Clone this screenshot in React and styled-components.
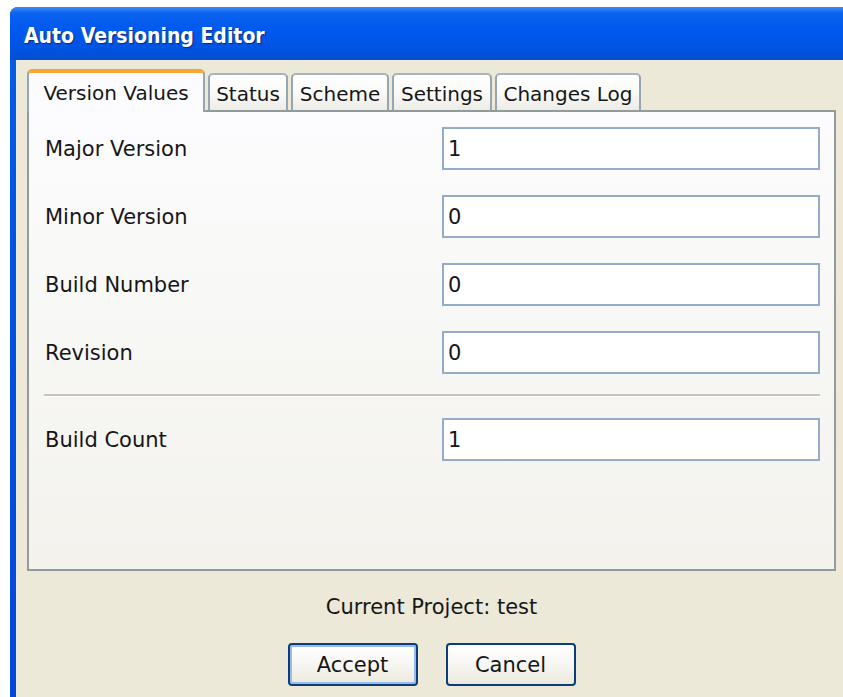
import React from "react";
import styled, { createGlobalStyle } from "styled-components";

const Global = createGlobalStyle`
  html, body { margin: 0; padding: 0; background: #ffffff; overflow: hidden; }
  body { width: 843px; height: 697px; }
`;

const Window = styled.div`
  margin: 7px 0 0 10px;
  width: 850px;
  height: 700px;
  display: flex;
  flex-direction: column;
  border-radius: 8px 8px 0 0;
  background: linear-gradient(180deg, #0a5fe6 0%, #0055e5 30%, #0048d8 100%);
  overflow: hidden;
`;

const TitleBar = styled.div`
  height: 53px;
  flex: none;
  display: flex;
  align-items: center;
  padding-left: 14px;
  background: linear-gradient(180deg, #3d8cf6 0%, #0a62ee 12%, #0058ee 45%, #0054e3 75%, #0150d8 92%, #0a4bc6 100%);
`;

const Title = styled.span`
  font-family: "DejaVu Sans Condensed", "DejaVu Sans", Verdana, sans-serif;
  font-weight: bold;
  font-size: 21px;
  color: #ffffff;
  text-shadow: 1px 1px 1px #0a2a80;
  margin-top: 4px;
`;

const Body = styled.div`
  flex: 1;
  margin-left: 6px;
  background: #ece9d8;
  padding: 9px 0 0 11px;
  display: flex;
  flex-direction: column;
  font-family: "DejaVu Sans", Tahoma, sans-serif;
  font-size: 21px;
  color: #161616;
`;

const TabStrip = styled.div`
  display: flex;
  align-items: flex-end;
  height: 41px;
  gap: 3px;
  position: relative;
  z-index: 1;
`;

const Tab = styled.div`
  box-sizing: border-box;
  width: ${p => p.$w}px;
  height: ${p => (p.$active ? 43 : 37)}px;
  margin-bottom: ${p => (p.$active ? -2 : 0)}px;
  display: flex;
  align-items: center;
  justify-content: center;
  font-size: 20px;
  border: 2px solid #97a5b0;
  border-bottom: none;
  border-radius: 5px 5px 0 0;
  background: ${p =>
    p.$active
      ? "#fcfcfe"
      : "linear-gradient(180deg, #ffffff 0%, #fafaf8 50%, #ecebe5 100%)"};
  border-top: ${p => (p.$active ? "4px solid #f8a633" : "2px solid #a9b4bd")};
  padding-top: ${p => (p.$active ? 0 : 2)}px;
  white-space: nowrap;
`;

const Panel = styled.div`
  box-sizing: border-box;
  width: 809px;
  height: 461px;
  border: 2px solid #919b9c;
  background: linear-gradient(180deg, #fcfcfe 0%, #f8f8f6 40%, #f3f2ed 100%);
  padding: 15px 14px 0 15px;
  display: flex;
  flex-direction: column;
`;

const Row = styled.div`
  display: flex;
  align-items: center;
  justify-content: space-between;
  height: 43px;
  margin-bottom: ${p => p.$gap ?? 25}px;
`;

const Label = styled.span`
  padding-left: 1px;
`;

const Field = styled.div`
  box-sizing: border-box;
  width: 378px;
  height: 43px;
  border: 2px solid #94acca;
  background: #ffffff;
  display: flex;
  align-items: center;
  padding-left: 4px;
`;

const Separator = styled.div`
  height: 2px;
  background: #c6c4b8;
  border-bottom: 1px solid #ffffff;
  margin: 0 0 21px 0;
`;

const Footer = styled.div`
  width: 809px;
  display: flex;
  flex-direction: column;
  align-items: center;
`;

const ProjectLine = styled.div`
  margin-top: 24px;
`;

const Buttons = styled.div`
  display: flex;
  gap: 28px;
  margin-top: 24px;
`;

const Button = styled.div`
  box-sizing: border-box;
  width: 130px;
  height: 43px;
  border-radius: 4px;
  border: 2px solid #0c3d78;
  box-shadow: inset 0 0 0 ${p => (p.$default ? "2px #98bbec" : "0 transparent")};
  background: linear-gradient(180deg, #ffffff 0%, #f7f6f2 50%, #ebe8dc 100%);
  display: flex;
  align-items: center;
  justify-content: center;
`;

const tabs = [
  { name: "Version Values", w: 178 },
  { name: "Status", w: 80 },
  { name: "Scheme", w: 98 },
  { name: "Settings", w: 100 },
  { name: "Changes Log", w: 146 },
];

const values = [
  ["Major Version", "1"],
  ["Minor Version", "0"],
  ["Build Number", "0"],
  ["Revision", "0"],
];

export default function App() {
  return (
    <>
      <Global />
      <Window>
        <TitleBar>
          <Title>Auto Versioning Editor</Title>
        </TitleBar>
        <Body>
          <TabStrip>
            {tabs.map((t, i) => (
              <Tab key={t.name} $w={t.w} $active={i === 0}>
                {t.name}
              </Tab>
            ))}
          </TabStrip>
          <Panel>
            {values.map(([label, value], i) => (
              <Row key={label} $gap={i === values.length - 1 ? 20 : 25}>
                <Label>{label}</Label>
                <Field>{value}</Field>
              </Row>
            ))}
            <Separator />
            <Row>
              <Label>Build Count</Label>
              <Field>1</Field>
            </Row>
          </Panel>
          <Footer>
            <ProjectLine>Current Project: test</ProjectLine>
            <Buttons>
              <Button $default>Accept</Button>
              <Button>Cancel</Button>
            </Buttons>
          </Footer>
        </Body>
      </Window>
    </>
  );
}
